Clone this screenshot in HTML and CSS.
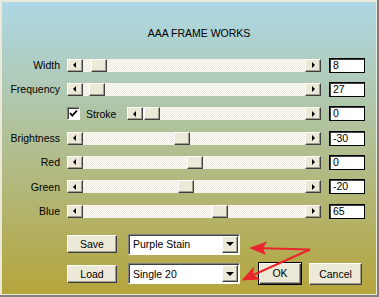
FILE: index.html
```html
<!DOCTYPE html>
<html lang="en">
<head>
    <meta charset="UTF-8">
    <meta name="viewport" content="width=device-width, initial-scale=1.0">
    <title>AAA Frame Works</title>
    <link rel="stylesheet" href="styles.css">
</head>
<body>
    <div class="frame">
        <div class="client">
            <div class="title">AAA FRAME WORKS</div>

            <!-- Slider rows -->
            <div class="rows">
                <div class="label">Width</div>
                <div class="scroll">
                    <span class="btn left"></span>
                    <div class="track"><span class="thumb" style="margin-left: 8px"></span></div>
                    <span class="btn right"></span>
                </div>
                <div class="edit">8</div>

                <div class="label">Frequency</div>
                <div class="scroll">
                    <span class="btn left"></span>
                    <div class="track"><span class="thumb" style="margin-left: 6px"></span></div>
                    <span class="btn right"></span>
                </div>
                <div class="edit">27</div>

                <div class="label"></div>
                <div class="stroke">
                    <span class="check">
                        <svg width="11" height="11" viewBox="0 0 11 11"><path d="M2 5 L4.3 7.6 L9 2.5" fill="none" stroke="#000" stroke-width="1.8"/></svg>
                    </span>
                    <span class="stroke-text">Stroke</span>
                    <div class="scroll short">
                        <span class="btn left"></span>
                        <div class="track"><span class="thumb" style="margin-left: 1px"></span></div>
                        <span class="btn right"></span>
                    </div>
                </div>
                <div class="edit">0</div>

                <div class="label">Brightness</div>
                <div class="scroll">
                    <span class="btn left"></span>
                    <div class="track"><span class="thumb" style="margin-left: 91px"></span></div>
                    <span class="btn right"></span>
                </div>
                <div class="edit">-30</div>

                <div class="label">Red</div>
                <div class="scroll">
                    <span class="btn left"></span>
                    <div class="track"><span class="thumb" style="margin-left: 104px"></span></div>
                    <span class="btn right"></span>
                </div>
                <div class="edit">0</div>

                <div class="label">Green</div>
                <div class="scroll">
                    <span class="btn left"></span>
                    <div class="track"><span class="thumb" style="margin-left: 95px"></span></div>
                    <span class="btn right"></span>
                </div>
                <div class="edit">-20</div>

                <div class="label">Blue</div>
                <div class="scroll">
                    <span class="btn left"></span>
                    <div class="track"><span class="thumb" style="margin-left: 129px"></span></div>
                    <span class="btn right"></span>
                </div>
                <div class="edit">65</div>
            </div>

            <!-- Presets and dialog buttons -->
            <div class="bottom">
                <div class="push">Save</div>
                <div class="combo"><span class="combo-text">Purple Stain</span><span class="drop"></span></div>
                <div></div>
                <div></div>

                <div class="push">Load</div>
                <div class="combo"><span class="combo-text">Single 20</span><span class="drop"></span></div>
                <div class="push ok">OK</div>
                <div class="push cancel">Cancel</div>
            </div>
        </div>

        <svg class="arrows" width="379" height="297" viewBox="0 0 379 297">
            <line x1="310" y1="249.5" x2="262" y2="248.3" stroke="#e8262c" stroke-width="2"/>
            <polygon points="249,248 267,241.5 263,248.2 266,255" fill="#e8262c"/>
            <line x1="310" y1="249.5" x2="252" y2="275.5" stroke="#e8262c" stroke-width="2"/>
            <polygon points="241.5,280.5 254,266.5 253,274.5 260,279.5" fill="#e8262c"/>
        </svg>
    </div>
</body>
</html>
```

FILE: styles.css
```css
body {
    margin: 0;
    font-family: "Liberation Sans", Arial, sans-serif;
    font-size: 10.5px;
    color: #000;
}

.frame {
    position: relative;
    width: 379px;
    height: 297px;
    box-sizing: border-box;
    padding: 2px 1px 1px 2px;
    background: #ece9d8;
    border-right: 2px solid #808080;
    border-bottom: 2px solid #808080;
}

.client {
    height: 100%;
    box-sizing: border-box;
    padding-top: 24px;
    background: linear-gradient(#add8e6, #b5a53c);
}

.title {
    padding-left: 20px;
    text-align: center;
    line-height: 14px;
}

.rows {
    display: grid;
    grid-template-columns: 58px 254px 37px;
    grid-auto-rows: 24.33px;
    column-gap: 7px;
    align-items: center;
    margin-top: 13px;
}

.label {
    text-align: right;
    white-space: nowrap;
}

.scroll {
    display: flex;
    height: 13px;
}

.scroll.short {
    width: 194px;
    margin-left: auto;
}

.btn,
.thumb {
    display: flex;
    align-items: center;
    justify-content: center;
    width: 16px;
    height: 13px;
    box-sizing: border-box;
    flex-shrink: 0;
    background: #ece9d8;
    border: 1px solid;
    border-color: #fff #404040 #404040 #fff;
    box-shadow: inset -1px -1px #a09d8c;
}

.btn::before {
    content: "";
    border-top: 3px solid transparent;
    border-bottom: 3px solid transparent;
}

.btn.left::before {
    border-right: 3px solid #000;
    margin-right: 1px;
}

.btn.right::before {
    border-left: 3px solid #000;
    margin-left: 1px;
}

.track {
    flex: 1;
    display: flex;
    background: repeating-conic-gradient(#ece9d8 0% 25%, #fff 0% 50%) 0 0 / 2px 2px;
}

.edit {
    height: 15px;
    margin-left: 1px;
    padding-left: 3px;
    box-sizing: border-box;
    line-height: 13px;
    background: #fff;
    border: 1px solid #000;
    box-shadow: inset 1px 1px #404040;
}

.stroke {
    display: flex;
    align-items: center;
}

.check {
    display: flex;
    align-items: center;
    justify-content: center;
    width: 13px;
    height: 13px;
    box-sizing: border-box;
    background: #fff;
    border: 1px solid;
    border-color: #808080 #fff #fff #808080;
    box-shadow: inset 1px 1px #404040;
}

.stroke-text {
    margin-left: 6px;
}

.bottom {
    display: grid;
    grid-template-columns: 50px 112px 51px 49px;
    grid-template-rows: 24px 24px;
    column-gap: 11px;
    row-gap: 5.5px;
    align-items: center;
    margin-top: 9px;
    padding-left: 65px;
}

.push {
    height: 18px;
    box-sizing: border-box;
    text-align: center;
    line-height: 16px;
    background: #ece9d8;
    border: 1px solid;
    border-color: #fff #404040 #404040 #fff;
    box-shadow: inset -1px -1px #a09d8c;
}

.push.ok {
    height: 23px;
    margin-left: 7px;
    line-height: 21px;
    border: 1px solid #000;
    box-shadow: inset 1px 1px #fff, inset -1px -1px #404040, inset -2px -2px #a09d8c;
}

.push.cancel {
    height: 22px;
    margin-left: -4px;
    line-height: 20px;
}

.combo {
    display: flex;
    align-items: center;
    height: 21px;
    box-sizing: border-box;
    padding: 1px;
    background: #fff;
    border: 1px solid;
    border-color: #808080 #fff #fff #808080;
    box-shadow: inset 1px 1px #404040;
}

.combo-text {
    flex: 1;
    padding-left: 3px;
}

.drop {
    display: flex;
    align-items: center;
    justify-content: center;
    width: 16px;
    height: 17px;
    box-sizing: border-box;
    background: #ece9d8;
    border: 1px solid;
    border-color: #fff #404040 #404040 #fff;
    box-shadow: inset -1px -1px #a09d8c;
}

.drop::before {
    content: "";
    border-left: 4px solid transparent;
    border-right: 4px solid transparent;
    border-top: 4px solid #000;
}

.arrows {
    position: absolute;
    left: 0;
    top: 0;
    pointer-events: none;
}
```
